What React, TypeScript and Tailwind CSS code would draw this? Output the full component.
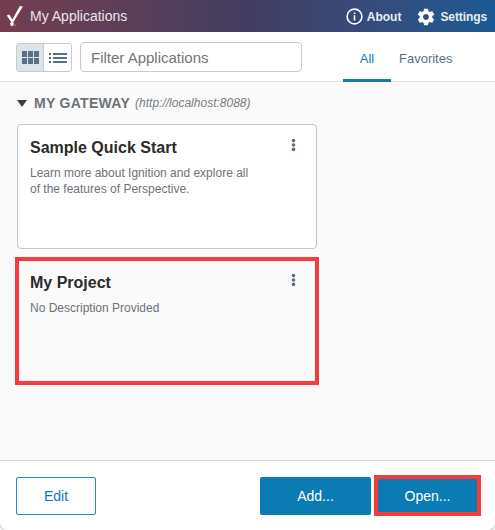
import React, { useState } from 'react'

const applications = [
  {
    title: 'Sample Quick Start',
    description: 'Learn more about Ignition and explore all of the features of Perspective.',
    selected: false,
  },
  {
    title: 'My Project',
    description: 'No Description Provided',
    selected: true,
  },
]

function Logo() {
  return (
    <svg width="18" height="22" viewBox="0 0 18 22" fill="#fff">
      <path d="M0.8 10.6L3.2 9.6L6.4 14.6L13.8 1L16.9 1.4L7.2 17.3H5.3Z" />
      <circle cx="6" cy="19" r="1.9" />
      <circle cx="9.6" cy="20.1" r="0.6" opacity="0.5" />
    </svg>
  )
}

function InfoIcon() {
  return (
    <svg width="17" height="17" viewBox="0 0 17 17" fill="none">
      <circle cx="8.5" cy="8.5" r="7.4" stroke="#fff" strokeWidth="1.6" />
      <path d="M7.7 7.2h1.6v5.3H7.7zM7.7 4.5h1.6v1.6H7.7z" fill="#fff" />
    </svg>
  )
}

function GearIcon() {
  return (
    <svg width="20" height="20" viewBox="0 0 24 24" fill="#fff">
      <path d="M19.43 12.98c.04-.32.07-.64.07-.98s-.03-.66-.07-.98l2.11-1.65c.19-.15.24-.42.12-.64l-2-3.46c-.12-.22-.39-.3-.61-.22l-2.49 1c-.52-.4-1.08-.73-1.69-.98l-.38-2.65A.49.49 0 0 0 14 2h-4c-.25 0-.46.18-.49.42l-.38 2.65c-.61.25-1.17.59-1.69.98l-2.49-1c-.23-.09-.49 0-.61.22l-2 3.46c-.13.22-.07.49.12.64l2.11 1.65c-.04.32-.07.65-.07.98s.03.66.07.98l-2.11 1.65c-.19.15-.24.42-.12.64l2 3.46c.12.22.39.3.61.22l2.49-1c.52.4 1.08.73 1.69.98l.38 2.65c.03.24.24.42.49.42h4c.25 0 .46-.18.49-.42l.38-2.65c.61-.25 1.17-.59 1.69-.98l2.49 1c.23.09.49 0 .61-.22l2-3.46c.12-.22.07-.49-.12-.64l-2.11-1.65zM12 15.5c-1.93 0-3.5-1.57-3.5-3.5s1.57-3.5 3.5-3.5 3.5 1.57 3.5 3.5-1.57 3.5-3.5 3.5z" />
    </svg>
  )
}

function GridIcon() {
  return (
    <svg width="17" height="13" viewBox="0 0 17 13" fill="#586f85">
      <path d="M0 0h5v6H0zM6 0h5v6H6zM12 0h5v6h-5zM0 7h5v6H0zM6 7h5v6H6zM12 7h5v6h-5z" />
    </svg>
  )
}

function ListIcon() {
  return (
    <svg width="18" height="10" viewBox="0 0 18 10" fill="#586f85">
      <path d="M0 0h2v2H0zM4 0h14v2H4zM0 4h2v2H0zM4 4h14v2H4zM0 8h2v2H0zM4 8h14v2H4z" />
    </svg>
  )
}

function MoreIcon() {
  return (
    <svg width="5" height="14" viewBox="0 0 5 14" fill="#586f85">
      <circle cx="2.5" cy="2.6" r="1.8" />
      <circle cx="2.5" cy="7" r="1.8" />
      <circle cx="2.5" cy="11.4" r="1.8" />
    </svg>
  )
}

export default function App() {
  const [filter, setFilter] = useState('')

  return (
    <div className="w-[495px] h-[530px] bg-white overflow-hidden font-['Liberation_Sans',Arial,sans-serif]">
      <div className="flex flex-col h-full bg-white rounded-b-[7px] overflow-hidden shadow-[0_0_1px_1px_#c8c8c8]">
        <header className="flex items-center h-8 shrink-0 bg-linear-to-r from-[#753d4e] via-[#423d61] to-[#195a94] text-white">
          <div className="ml-[6px]">
            <Logo />
          </div>
          <span className="ml-[6px] text-[14px] text-[#e9e6ec]">My Applications</span>
          <button className="ml-auto flex items-center pt-[1px]">
            <InfoIcon />
            <span className="ml-1 text-[12px] font-bold text-[#e9edf2]">About</span>
          </button>
          <button className="ml-[15px] mr-[8px] flex items-center pt-[1px]">
            <GearIcon />
            <span className="ml-1 text-[12px] tracking-[-0.1px] font-bold text-[#e9edf2]">Settings</span>
          </button>
        </header>

        <div className="flex h-[50px] shrink-0 border-b border-[#e3e3e3] pl-4">
          <div className="flex mt-[11px] w-14 h-[29px] border border-[#c9c9c9] rounded-[3px] overflow-hidden">
            <button className="flex items-center justify-center w-[27px] bg-[#dce4ea] border-r border-[#c9c9c9]">
              <GridIcon />
            </button>
            <button className="flex items-center justify-center flex-1">
              <ListIcon />
            </button>
          </div>
          <input
            className="ml-2 mt-[10px] w-[222px] h-[30px] px-[10px] pt-[1px] border border-[#c9c9c9] rounded-[4px] text-[15px] text-[#757575] placeholder:text-[#757575] outline-none"
            placeholder="Filter Applications"
            value={filter}
            onChange={(e) => setFilter(e.target.value)}
          />
          <nav className="flex ml-[41px] text-[13px] leading-[18px]">
            <button className="flex justify-center w-12 h-[50px] pt-[18px] border-b-3 border-[#1a7cac] text-[#0c7bb3]">All</button>
            <button className="flex ml-2 h-[50px] pt-[18px] text-[#586f85]">Favorites</button>
          </nav>
        </div>

        <main className="flex-1 bg-[#fafafa] pl-[17px] pt-[13px]">
          <div className="flex items-center h-4">
            <svg width="10" height="7" viewBox="0 0 10 7" fill="#404040">
              <path d="M0 0h10L5 7z" />
            </svg>
            <h2 className="ml-[7px] text-[14px] leading-4 tracking-[0.3px] font-bold text-[#6c7378]">MY GATEWAY</h2>
            <span className="ml-[5px] text-[12px] leading-4 italic text-[#777d82]">(http://localhost:8088)</span>
          </div>

          <div className="flex flex-col gap-[8px] mt-[13px]">
            {applications.map((app) => (
              <div
                key={app.title}
                className={
                  app.selected
                    ? 'flex justify-between w-[304px] h-[128px] -ml-[2px] border-4 border-[#f43b3d] pl-[11px] pr-[19px] pt-[12px] shadow-[inset_0_0_0_1px_#eef3f6]'
                    : 'flex justify-between w-[300px] h-[125px] bg-white border border-[#c4c6cb] rounded-[4px] pl-[12px] pr-[20px] pt-[13px]'
                }
              >
                <div className="w-[225px]">
                  <h3 className="text-[16px] leading-5 font-bold text-[#2b2b2b]">{app.title}</h3>
                  <p className="mt-[7px] text-[12px] leading-4 text-[#6c7378]">{app.description}</p>
                </div>
                <button className="flex h-[14px]">
                  <MoreIcon />
                </button>
              </div>
            ))}
          </div>
        </main>

        <footer className="flex h-[70px] shrink-0 border-t border-[#d5d5d5] pl-4 text-[14px]">
          <button className="mt-4 w-20 h-[38px] border border-[#2b8abc] rounded-[2px] text-[#0c7bb3]">Edit</button>
          <button className="ml-[164px] mt-4 w-[111px] h-[38px] bg-[#0c7bb3] rounded-[2px] text-white">Add...</button>
          <button className="ml-[3px] mt-[14px] w-[107px] h-[41px] bg-[#0c7bb3] border-4 border-[#f43b3d] pt-[1px] text-white">Open...</button>
        </footer>
      </div>
    </div>
  )
}
